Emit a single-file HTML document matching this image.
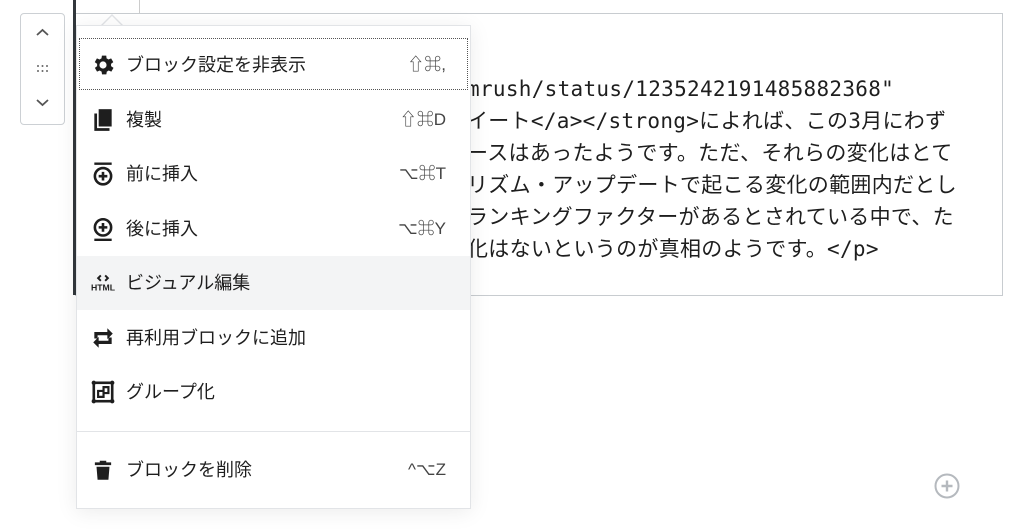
<!DOCTYPE html>
<html><head><meta charset="utf-8"><style>
body{margin:0;width:1024px;height:529px;background:#fff;position:relative;overflow:hidden;font-family:"Liberation Sans","Noto Sans CJK JP",sans-serif;color:#1e1e1e}
.block{position:absolute;left:75px;top:13px;width:926px;height:281px;border:1px solid #c8ccd0;box-sizing:content-box}
.bar{position:absolute;left:73px;top:0;width:3px;height:295px;background:#32373c}
.vline{position:absolute;left:139px;top:0;width:1px;height:13px;background:#ccc}
.code{position:absolute;left:467px;top:73px;font-family:"DejaVu Sans Mono","Noto Sans CJK JP",monospace;font-size:21px;letter-spacing:0.3px;line-height:32px;color:#1e1e1e;white-space:pre}
.mover{position:absolute;left:20px;top:13px;width:43px;height:110px;border:1px solid #ccd0d4;border-radius:4px;background:#fff}
.menu{position:absolute;left:76px;top:25px;width:393px;height:482px;background:#fff;border:1px solid #e2e4e7;box-shadow:0 3px 20px rgba(0,0,0,.08)}
.arrow{position:absolute;left:100px;top:14px;width:0;height:0;border-left:12px solid transparent;border-right:12px solid transparent;border-bottom:12px solid #e2e4e7}
.arrow2{position:absolute;left:101px;top:16px;width:0;height:0;border-left:11px solid transparent;border-right:11px solid transparent;border-bottom:11px solid #fff}
.item{position:absolute;left:0;width:393px;height:54px;font-size:18px;color:#1e1e1e}
.item .ic{position:absolute;left:13px;top:14px;width:26px;height:26px}
.item .t{position:absolute;left:49px;top:14px;line-height:26px}
.item .k{position:absolute;right:24px;top:14px;line-height:26px;color:#444;font-size:17px}
.focus{position:absolute;left:2px;top:12px;width:389px;height:52px;border:1px dotted #555;box-sizing:border-box}
</style></head><body>
<div class="vline"></div>
<div class="block"></div>
<div class="bar"></div>
<div class="code">mrush/status/1235242191485882368"
イート&lt;/a&gt;&lt;/strong&gt;によれば、この3月にわず
ースはあったようです。ただ、それらの変化はとて
リズム・アップデートで起こる変化の範囲内だとし
ランキングファクターがあるとされている中で、た
化はないというのが真相のようです。&lt;/p&gt;</div>
<div class="mover">
<svg width="43" height="110" viewBox="0 0 43 110"><path d="M16 21l5.5-5 5.5 5M16 86l5.5 5 5.5-5" stroke="#555" stroke-width="1.8" fill="none"/><g fill="#666"><circle cx="17" cy="52" r="1"/><circle cx="21.5" cy="52" r="1"/><circle cx="26" cy="52" r="1"/><circle cx="17" cy="57" r="1"/><circle cx="21.5" cy="57" r="1"/><circle cx="26" cy="57" r="1"/></g></svg>
</div>
<div class="arrow"></div><div class="arrow2"></div>
<div class="menu">
<div class="focus"></div>
<div class="item" style="top:12px"><svg class="ic" viewBox="0 0 24 24"><path fill="#1e1e1e" d="M19.4 13a7.6 7.6 0 000-2l2.1-1.6-2-3.5-2.5 1a7 7 0 00-1.7-1L15 3.3h-4l-.4 2.6a7 7 0 00-1.7 1l-2.5-1-2 3.5L6.6 11a7.6 7.6 0 000 2l-2.1 1.6 2 3.5 2.5-1a7 7 0 001.7 1l.4 2.6h4l.4-2.6a7 7 0 001.7-1l2.5 1 2-3.5zM12 15.3A3.3 3.3 0 1112 8.7a3.3 3.3 0 010 6.6z"/></svg><span class="t">ブロック設定を非表示</span><span class="k">⇧⌘,</span></div>
<div class="item" style="top:67px"><svg class="ic" viewBox="0 0 24 24"><path fill="#1e1e1e" d="M8 2h12v16H8z"/><path fill="#1e1e1e" d="M4 6h2.5v13.5H18V22H4z"/></svg><span class="t">複製</span><span class="k">⇧⌘D</span></div>
<div class="item" style="top:121px"><svg class="ic" viewBox="0 0 24 24"><path d="M4 2.5h16" stroke="#1e1e1e" stroke-width="2.2"/><circle cx="12" cy="14" r="7.5" fill="none" stroke="#1e1e1e" stroke-width="2.4"/><path d="M12 10v8M8 14h8" stroke="#1e1e1e" stroke-width="2.4"/></svg><span class="t">前に挿入</span><span class="k">⌥⌘T</span></div>
<div class="item" style="top:176px"><svg class="ic" viewBox="0 0 24 24"><path d="M4 22h16" stroke="#1e1e1e" stroke-width="2.2"/><circle cx="12" cy="10.5" r="7.5" fill="none" stroke="#1e1e1e" stroke-width="2.4"/><path d="M12 6.5v8M8 10.5h8" stroke="#1e1e1e" stroke-width="2.4"/></svg><span class="t">後に挿入</span><span class="k">⌥⌘Y</span></div>
<div class="item" style="top:230px;background:#f3f4f5"><svg class="ic" viewBox="0 0 24 24"><path d="M10 5l-2.5 2.5L10 10M14 5l2.5 2.5L14 10" stroke="#1e1e1e" stroke-width="1.8" fill="none"/><text x="12" y="19" font-size="8" font-weight="bold" text-anchor="middle" font-family="Liberation Sans" fill="#1e1e1e">HTML</text></svg><span class="t">ビジュアル編集</span></div>
<div class="item" style="top:285px"><svg class="ic" viewBox="0 0 24 24"><path fill="#1e1e1e" d="M4 6.5h12V3l5 5-5 5V9.5H7v3H4zM20 17.5H8V21l-5-5 5-5v3.5h9v-3h3z"/></svg><span class="t">再利用ブロックに追加</span></div>
<div class="item" style="top:339px"><svg class="ic" viewBox="0 0 24 24"><rect x="3.5" y="3.5" width="17" height="17" fill="none" stroke="#1e1e1e" stroke-width="2.4"/><g fill="#1e1e1e"><circle cx="3.5" cy="3.5" r="2"/><circle cx="20.5" cy="3.5" r="2"/><circle cx="3.5" cy="20.5" r="2"/><circle cx="20.5" cy="20.5" r="2"/></g><path d="M7.5 11h5V7.5h4.5V13h-4.5v3.5h-5z" fill="none" stroke="#1e1e1e" stroke-width="2"/></svg><span class="t">グループ化</span></div>
<div style="position:absolute;left:0;top:405px;width:393px;height:1px;background:#e2e4e7"></div>
<div class="item" style="top:417px"><svg class="ic" viewBox="0 0 24 24"><path fill="#1e1e1e" d="M9 3.5h6V5h4.5v2.5h-15V5H9zM6 9h12l-1 12H7z"/></svg><span class="t">ブロックを削除</span><span class="k">^⌥Z</span></div>
</div>
<svg style="position:absolute;left:933px;top:472px" width="28" height="28" viewBox="0 0 28 28"><circle cx="14" cy="14" r="11.5" fill="none" stroke="#b5b9be" stroke-width="2"/><path d="M14 8.5v11M8.5 14h11" stroke="#b5b9be" stroke-width="2.4"/></svg>
</body></html>
